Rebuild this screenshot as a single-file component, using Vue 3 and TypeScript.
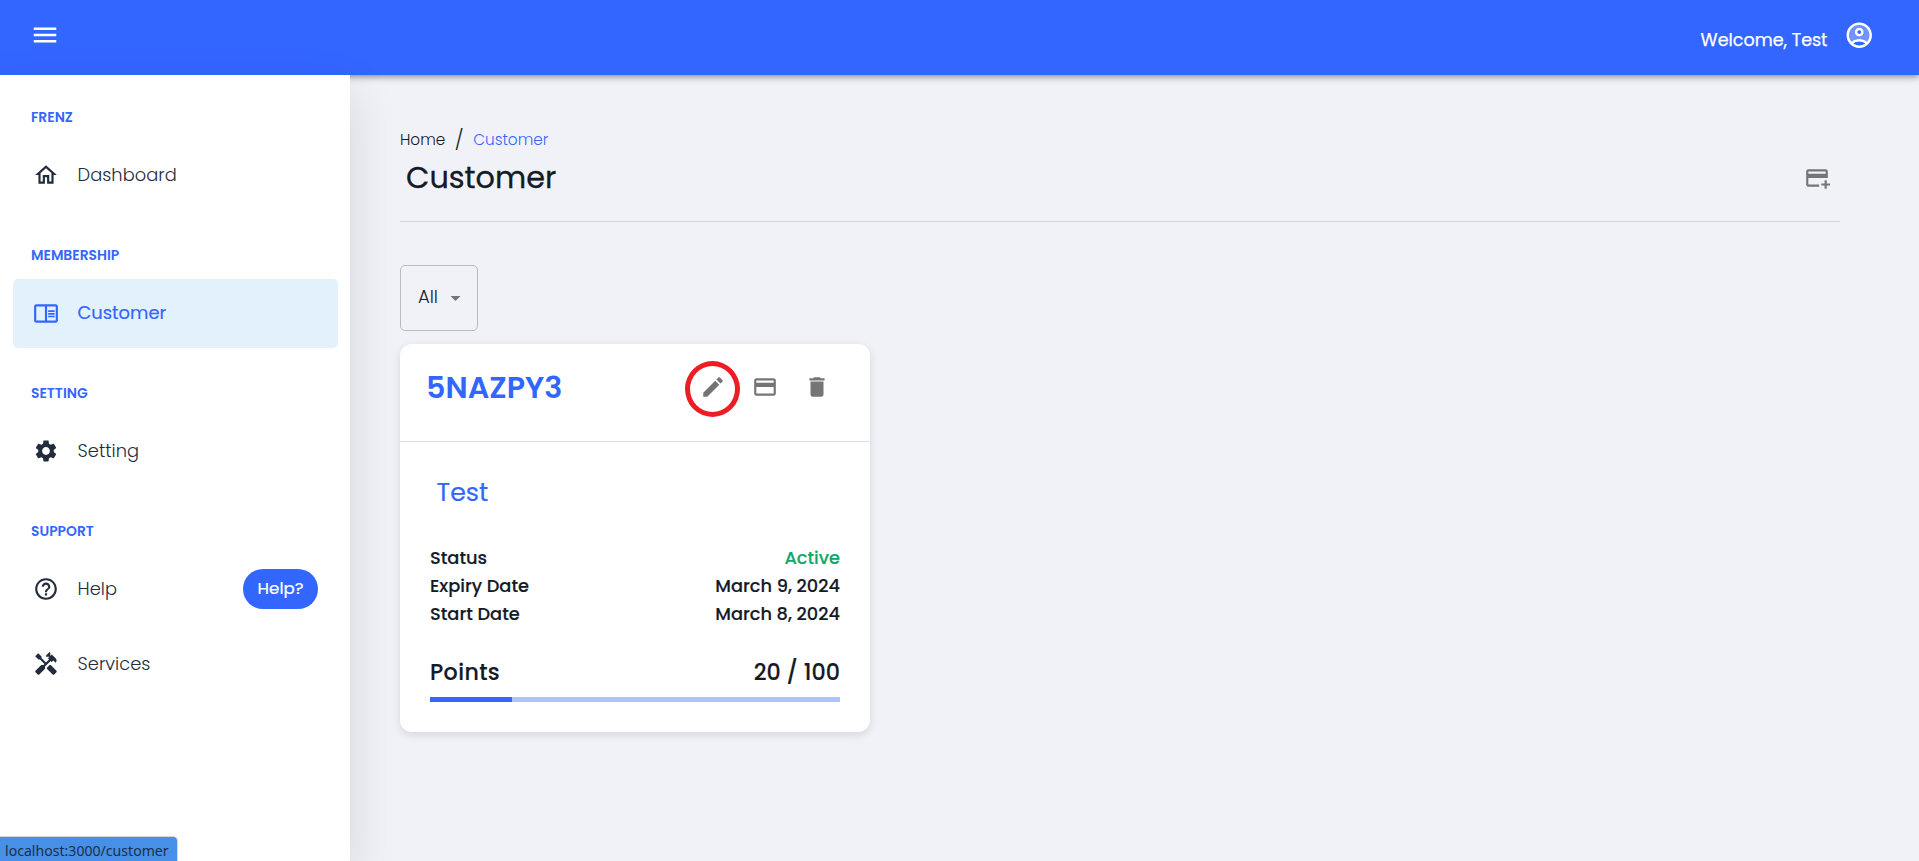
<script setup lang="ts">
interface NavItem {
  label: string
  icon: string[]
  active?: boolean
  badge?: string
}
interface NavGroup {
  title: string
  items: NavItem[]
}
interface DetailRow {
  label: string
  value: string
  positive?: boolean
}

const icons = {
  menu: 'M3 18h18v-2H3v2zm0-5h18v-2H3v2zm0-7v2h18V6H3z',
  home: 'm12 5.69 5 4.5V18h-2v-6H9v6H7v-7.81l5-4.5M12 3 2 12h3v8h6v-6h2v6h6v-8h3L12 3z',
  reader:
    'M21 4H3c-1.1 0-2 .9-2 2v13c0 1.1.9 2 2 2h18c1.1 0 2-.9 2-2V6c0-1.1-.9-2-2-2zM3 19V6h8v13H3zm18 0h-8V6h8v13zm-7-9.5h6V11h-6zm0 2.5h6v1.5h-6zm0 2.5h6V16h-6z',
  settings:
    'M19.14 12.94c.04-.3.06-.61.06-.94 0-.32-.02-.64-.07-.94l2.03-1.58c.18-.14.23-.41.12-.61l-1.92-3.32c-.12-.22-.37-.29-.59-.22l-2.39.96c-.5-.38-1.03-.7-1.62-.94l-.36-2.54c-.04-.24-.24-.41-.48-.41h-3.84c-.24 0-.43.17-.47.41l-.36 2.54c-.59.24-1.13.57-1.62.94l-2.39-.96c-.22-.08-.47 0-.59.22L2.74 8.87c-.12.21-.08.47.12.61l2.03 1.58c-.05.3-.09.63-.09.94s.02.64.07.94l-2.03 1.58c-.18.14-.23.41-.12.61l1.92 3.32c.12.22.37.29.59.22l2.39-.96c.5.38 1.03.7 1.62.94l.36 2.54c.05.24.24.41.48.41h3.84c.24 0 .44-.17.47-.41l.36-2.54c.59-.24 1.13-.56 1.62-.94l2.39.96c.22.08.47 0 .59-.22l1.92-3.32c.12-.22.07-.47-.12-.61l-2.01-1.58zM12 15.6c-1.98 0-3.6-1.62-3.6-3.6s1.62-3.6 3.6-3.6 3.6 1.62 3.6 3.6-1.62 3.6-3.6 3.6z',
  help: 'M11 18h2v-2h-2v2zm1-16C6.48 2 2 6.48 2 12s4.48 10 10 10 10-4.48 10-10S17.52 2 12 2zm0 18c-4.41 0-8-3.59-8-8s3.59-8 8-8 8 3.59 8 8-3.59 8-8 8zm0-14c-2.21 0-4 1.79-4 4h2c0-1.1.9-2 2-2s2 .9 2 2c0 2-3 1.75-3 5h2c0-2.25 3-2.5 3-5 0-2.21-1.79-4-4-4z',
  addCard:
    'M20 4H4c-1.11 0-1.99.89-1.99 2L2 18c0 1.11.89 2 2 2h10v-2H4v-6h18V6c0-1.11-.89-2-2-2zm0 4H4V6h16v2zm4 9v2h-3v3h-2v-3h-3v-2h3v-3h2v3h3z',
  edit: 'M3 17.25V21h3.75L17.81 9.94l-3.75-3.75L3 17.25zM20.71 7.04c.39-.39.39-1.02 0-1.41l-2.34-2.34c-.39-.39-1.02-.39-1.41 0l-1.83 1.83 3.75 3.75 1.83-1.83z',
  card: 'M20 4H4c-1.11 0-1.99.89-1.99 2L2 18c0 1.11.89 2 2 2h16c1.11 0 2-.89 2-2V6c0-1.11-.89-2-2-2zm0 14H4v-6h16v6zm0-10H4V6h16v2z',
  trash: 'M6 19c0 1.1.9 2 2 2h8c1.1 0 2-.9 2-2V7H6v12zM19 4h-3.5l-1-1h-5l-1 1H5v2h14V4z',
}
const handyman = [
  'm21.67 18.17-5.3-5.3h-.99l-2.54 2.54v.99l5.3 5.3c.39.39 1.02.39 1.41 0l2.12-2.12c.39-.38.39-1.02 0-1.41z',
  'm17.34 10.19 1.41-1.41 2.12 2.12c1.17-1.17 1.17-3.07 0-4.24l-3.54-3.54-1.41 1.41V1.71L15.22 1l-3.54 3.54.71.71h2.83l-1.41 1.41 1.06 1.06-2.89 2.89-4.13-4.13V5.06L4.83 2.04 2 4.87 5.03 7.9h1.41l4.13 4.13-.85.85H7.6l-5.3 5.3c-.39.39-.39 1.02 0 1.41l2.12 2.12c.39.39 1.02.39 1.41 0l5.3-5.3v-2.12l5.15-5.15 1.06 1.05z',
]

const groups: NavGroup[] = [
  { title: 'FRENZ', items: [{ label: 'Dashboard', icon: [icons.home] }] },
  { title: 'MEMBERSHIP', items: [{ label: 'Customer', icon: [icons.reader], active: true }] },
  { title: 'SETTING', items: [{ label: 'Setting', icon: [icons.settings] }] },
  {
    title: 'SUPPORT',
    items: [
      { label: 'Help', icon: [icons.help], badge: 'Help?' },
      { label: 'Services', icon: handyman },
    ],
  },
]

const details: DetailRow[] = [
  { label: 'Status', value: 'Active', positive: true },
  { label: 'Expiry Date', value: 'March 9, 2024' },
  { label: 'Start Date', value: 'March 8, 2024' },
]

const points = { current: 20, max: 100 }
</script>

<template>
  <div class="app">
    <header class="topbar">
      <button class="plain" aria-label="Menu">
        <svg class="icon-lg" viewBox="0 0 24 24"><path :d="icons.menu" /></svg>
      </button>
      <div class="account">
        <span class="welcome">Welcome, Test</span>
        <svg class="icon-lg avatar" viewBox="0 0 24 24">
          <path
            opacity=".3"
            d="M12 4c-4.42 0-8 3.58-8 8 0 1.95.7 3.73 1.86 5.12C7.55 15.8 9.68 15 12 15s4.45.8 6.14 2.12C19.3 15.73 20 13.95 20 12c0-4.42-3.58-8-8-8zm0 9c-1.93 0-3.5-1.57-3.5-3.5S10.07 6 12 6s3.5 1.57 3.5 3.5S13.93 13 12 13z"
          />
          <path
            d="M12 2C6.48 2 2 6.48 2 12s4.48 10 10 10 10-4.48 10-10S17.52 2 12 2zM7.35 18.5C8.66 17.56 10.26 17 12 17s3.34.56 4.65 1.5c-1.31.94-2.91 1.5-4.65 1.5s-3.34-.56-4.65-1.5zm10.79-1.38C16.45 15.8 14.32 15 12 15s-4.45.8-6.14 2.12C4.7 15.73 4 13.95 4 12c0-4.42 3.58-8 8-8s8 3.58 8 8c0 1.95-.7 3.73-1.86 5.12z"
          />
          <path
            d="M12 6c-1.93 0-3.5 1.57-3.5 3.5S10.07 13 12 13s3.5-1.57 3.5-3.5S13.93 6 12 6zm0 5c-.83 0-1.5-.67-1.5-1.5S11.17 8 12 8s1.5.67 1.5 1.5S12.83 11 12 11z"
          />
        </svg>
      </div>
    </header>

    <div class="body">
      <nav class="sidebar">
        <section v-for="group in groups" :key="group.title">
          <h2 class="group-title">{{ group.title }}</h2>
          <a v-for="item in group.items" :key="item.label" class="nav-item" :class="{ active: item.active }">
            <svg class="icon" viewBox="0 0 24 24"><path v-for="d in item.icon" :key="d" :d="d" /></svg>
            <span class="nav-label">{{ item.label }}</span>
            <span v-if="item.badge" class="badge">{{ item.badge }}</span>
          </a>
        </section>
      </nav>

      <main class="content">
        <div class="crumbs">
          <span class="crumb">Home</span>
          <span class="slash">/</span>
          <span class="crumb current">Customer</span>
        </div>
        <div class="page-head">
          <h1>Customer</h1>
          <button class="icon-btn add" aria-label="Add card">
            <svg class="icon" viewBox="0 0 24 24"><path :d="icons.addCard" /></svg>
          </button>
        </div>

        <div class="select">
          <span>All</span>
          <svg class="caret" viewBox="0 0 10 5"><path d="M0 0h10L5 5z" /></svg>
        </div>

        <article class="card">
          <div class="card-head">
            <h3>5NAZPY3</h3>
            <div class="actions">
              <button class="icon-btn marked" aria-label="Edit">
                <svg class="icon" viewBox="0 0 24 24"><path :d="icons.edit" /></svg>
              </button>
              <button class="icon-btn" aria-label="Card">
                <svg class="icon" viewBox="0 0 24 24"><path :d="icons.card" /></svg>
              </button>
              <button class="icon-btn" aria-label="Delete">
                <svg class="icon" viewBox="0 0 24 24"><path :d="icons.trash" /></svg>
              </button>
            </div>
          </div>
          <div class="card-body">
            <h4>Test</h4>
            <div v-for="row in details" :key="row.label" class="row">
              <span>{{ row.label }}</span>
              <span :class="{ positive: row.positive }">{{ row.value }}</span>
            </div>
            <div class="points">
              <span class="points-label">Points</span>
              <span>{{ points.current }} / {{ points.max }}</span>
            </div>
            <div class="progress">
              <div class="bar" :style="{ width: `${(points.current / points.max) * 100}%` }"></div>
            </div>
          </div>
        </article>
      </main>
    </div>

    <div class="url-hint">localhost:3000/customer</div>
  </div>
</template>

<style>
body {
  overflow: hidden;
}
</style>

<style scoped>
.app {
  position: relative;
  display: flex;
  flex-direction: column;
  height: 100vh;
  overflow: hidden;
  background: #f0f2f7;
  color: #141a26;
  font-family: Poppins, Inter, "Liberation Sans", sans-serif;
  white-space: nowrap;
}
h1,
h2,
h3,
h4 {
  margin: 0;
}
button {
  border: 0;
  background: none;
  padding: 0;
  color: inherit;
}
svg {
  display: block;
  fill: currentColor;
  flex: none;
}
.icon {
  width: 26px;
  height: 26px;
}
.icon-lg {
  width: 30px;
  height: 30px;
}
.topbar {
  position: relative;
  z-index: 1;
  flex: none;
  box-sizing: border-box;
  height: 75px;
  display: flex;
  justify-content: space-between;
  padding: 20px 44.5px 0 30px;
  background: #3366ff;
  color: #fff;
  box-shadow: 0 2px 4px -1px rgba(0, 0, 0, 0.2), 0 4px 5px rgba(0, 0, 0, 0.14), 0 1px 10px rgba(0, 0, 0, 0.12);
}
.plain {
  height: 30px;
}
.account {
  display: flex;
  gap: 16.5px;
}
.welcome {
  font-size: 17.5px;
  line-height: 30px;
  padding-top: 5px;
  -webkit-text-stroke: 0.25px currentColor;
}
.avatar {
  width: 30.5px;
  height: 30.5px;
}
.body {
  flex: 1;
  display: flex;
  min-height: 0;
}
.sidebar {
  position: relative;
  z-index: 2;
  flex: none;
  box-sizing: border-box;
  width: 350px;
  padding: 3px 12px 0 13px;
  background: #fff;
  box-shadow: 0 18px 45px rgba(20, 25, 40, 0.13);
}
.group-title {
  box-sizing: border-box;
  height: 63px;
  display: flex;
  align-items: center;
  padding: 16px 0 0 18px;
  font-size: 13.9px;
  font-weight: 600;
  color: #3366ff;
}
.nav-item {
  box-sizing: border-box;
  height: 68.9px;
  margin-bottom: 6px;
  display: flex;
  align-items: center;
  padding: 0 20px 0.5px;
  border-radius: 5px;
  color: #222c3c;
}
.nav-label {
  padding: 0 0 1.2px 18.6px;
  font-size: 17.85px;
  font-weight: 300;
}
.nav-item.active {
  background: #e3f1fd;
  color: #3366ff;
}
.active .nav-label {
  font-weight: 400;
  -webkit-text-stroke: 0.2px currentColor;
}
.badge {
  margin-left: auto;
  width: 75px;
  line-height: 40px;
  border-radius: 20px;
  background: #3366ff;
  color: #fff;
  text-align: center;
  font-size: 16.6px;
  -webkit-text-stroke: 0.2px currentColor;
}
.content {
  flex: 1;
  padding: 49px 79px 0 50px;
}
.crumbs {
  display: flex;
  align-items: center;
  height: 31px;
  font-size: 15.25px;
  font-weight: 300;
}
.slash {
  width: 28px;
  text-align: center;
  font-size: 20px;
}
.current {
  color: #3366ff;
}
.page-head {
  box-sizing: border-box;
  height: 67px;
  display: flex;
  justify-content: space-between;
  padding: 0 10px 0 6px;
  border-bottom: 1px solid #d2d4da;
}
h1 {
  font-size: 30.3px;
  line-height: 46px;
  font-weight: 400;
  -webkit-text-stroke: 0.3px currentColor;
}
.select {
  box-sizing: border-box;
  width: 78px;
  height: 66px;
  margin: 43px 0 13px;
  display: flex;
  align-items: center;
  justify-content: space-between;
  padding: 0 16px 4px 17px;
  border: 1px solid #b8babf;
  border-radius: 5px;
  font-size: 18px;
  font-weight: 300;
}
.caret {
  width: 11px;
  height: 5px;
  margin-top: 5px;
  color: #737578;
}
.card {
  width: 470px;
  height: 388px;
  border-radius: 12px;
  background: #fff;
  box-shadow: 0 3px 8px rgba(30, 35, 60, 0.13);
}
.card-head {
  box-sizing: border-box;
  height: 98px;
  display: flex;
  justify-content: space-between;
  padding: 17px 27px 0 26px;
  border-bottom: 1px solid #dedfe1;
}
h3 {
  font-size: 30.2px;
  line-height: 54px;
  font-weight: 600;
  color: #3366ff;
}
.actions {
  display: flex;
}
.icon-btn {
  padding: 13px;
  height: 52px;
  color: #757575;
}
.icon-btn.add {
  margin-top: -3px;
  padding: 13px 0;
}
.marked {
  position: relative;
}
.marked::after {
  content: "";
  position: absolute;
  left: -2px;
  top: 0;
  box-sizing: border-box;
  width: 55px;
  height: 56px;
  border: 5px solid #ee1c24;
  border-radius: 50%;
}
.card-body {
  padding: 30px 30px 0;
}
h4 {
  height: 71px;
  padding-left: 6.5px;
  font-size: 25.3px;
  line-height: 40px;
  font-weight: 400;
  color: #3366ff;
  -webkit-text-stroke: 0.2px currentColor;
}
.row {
  display: flex;
  justify-content: space-between;
  height: 28px;
  line-height: 30px;
  font-size: 17.8px;
  font-weight: 500;
  -webkit-text-stroke: 0.15px currentColor;
}
.positive {
  color: #11a76c;
}
.points {
  display: flex;
  justify-content: space-between;
  margin-top: 30px;
  height: 40px;
  line-height: 31px;
  font-size: 22.2px;
  font-weight: 500;
  -webkit-text-stroke: 0.15px currentColor;
}
.points-label {
  letter-spacing: 0.4px;
}
.progress {
  height: 5px;
  background: #b0c2ff;
}
.bar {
  height: 100%;
  background: #3366ff;
}
.url-hint {
  position: absolute;
  z-index: 3;
  left: 0;
  bottom: 0;
  box-sizing: border-box;
  width: 178px;
  height: 25px;
  padding-left: 5px;
  border: solid #d5d7dc;
  border-width: 1px 1px 0 0;
  border-top-right-radius: 5px;
  background: #4690e8;
  color: #1e2f45;
  font: 14.1px/27px "Noto Sans", sans-serif;
}
</style>
